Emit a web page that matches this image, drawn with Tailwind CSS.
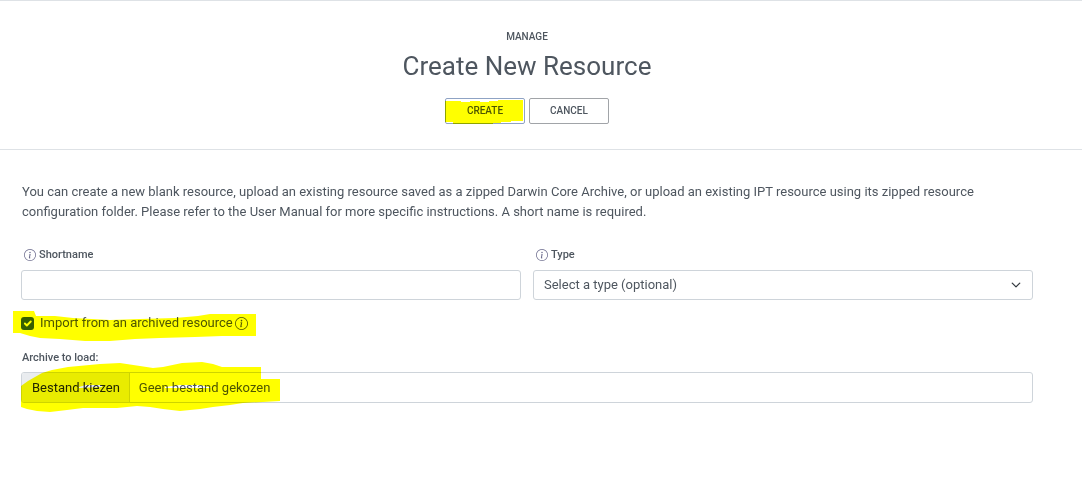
<!DOCTYPE html>
<html lang="en">
<head>
    <meta charset="UTF-8">
    <meta name="viewport" content="width=device-width, initial-scale=1.0">
    <title>Create New Resource</title>
    <script src="https://cdn.jsdelivr.net/npm/@tailwindcss/browser@4"></script>
</head>
<body class="bg-white text-[#4e565f] font-[Roboto,sans-serif] text-[13px] leading-5">
    <form action="" class="min-h-screen bg-white">
      <header class="border-y border-[#dee2e6] pt-7 pb-[25px] pl-[21px] pr-[49px] text-center">
        <p class="text-[10px] leading-4 font-medium">MANAGE</p>
        <h1 class="text-[26px] leading-[42px]">Create New Resource</h1>
        <div class="flex justify-center gap-1 pt-[11px]">
          <button type="submit" class="relative w-20 h-[26px] border border-[#8fa3c4] rounded-xs text-[10px] leading-4 font-medium">CREATE
            <svg class="absolute -left-px -top-px mix-blend-multiply" width="80" height="26" viewBox="0 0 80 26" fill="#ff0"><path d="M0 3H16V4H25V3H35V4H44V3H53V2H78V23H66V24H56V25H48V26H8V24H0Z"/></svg>
          </button>
          <button type="button" class="w-20 h-[26px] border border-[#a1a4a8] rounded-xs text-[10px] leading-4 font-medium">CANCEL</button>
        </div>
      </header>

      <main class="pl-[21px] pr-[49px] pt-8 pb-16">
        <p class="px-px">You can create a new blank resource, upload an existing resource saved as a zipped Darwin Core Archive, or upload an existing IPT resource using its zipped resource configuration folder. Please refer to the User Manual for more specific instructions. A short name is required.</p>

        <div class="grid grid-cols-2 gap-3 pt-[25px]">
          <div>
            <label for="shortname" class="flex items-center gap-[3px] pl-[3px] text-[11px] leading-4 font-medium">
              <svg width="12" height="12" viewBox="0 0 16 16" fill="#6a6a8c"><path d="M8 15A7 7 0 1 1 8 1a7 7 0 0 1 0 14m0 1A8 8 0 1 0 8 0a8 8 0 0 0 0 16"/><path d="m8.93 6.588-2.29.287-.082.38.45.083c.294.07.352.176.288.469l-.738 3.468c-.194.897.105 1.319.808 1.319.545 0 1.178-.252 1.465-.598l.088-.416c-.2.176-.492.246-.686.246-.275 0-.375-.193-.304-.533zM9 4.5a1 1 0 1 1-2 0 1 1 0 0 1 2 0"/></svg>
              Shortname
            </label>
            <input type="text" id="shortname" class="block mt-[7px] w-full h-[30px] px-[10px] border border-[#ced4da] rounded-[3px]">
          </div>
          <div>
            <label for="type" class="flex items-center gap-[3px] pl-[3px] text-[11px] leading-4 font-medium">
              <svg width="12" height="12" viewBox="0 0 16 16" fill="#6a6a8c"><path d="M8 15A7 7 0 1 1 8 1a7 7 0 0 1 0 14m0 1A8 8 0 1 0 8 0a8 8 0 0 0 0 16"/><path d="m8.93 6.588-2.29.287-.082.38.45.083c.294.07.352.176.288.469l-.738 3.468c-.194.897.105 1.319.808 1.319.545 0 1.178-.252 1.465-.598l.088-.416c-.2.176-.492.246-.686.246-.275 0-.375-.193-.304-.533zM9 4.5a1 1 0 1 1-2 0 1 1 0 0 1 2 0"/></svg>
              Type
            </label>
            <div class="relative mt-[7px]">
              <select id="type" class="block appearance-none w-full h-[30px] px-[10px] border border-[#ced4da] rounded-[3px]">
                <option value="" selected>Select a type (optional)</option>
                <option value="occurrence">Occurrence</option>
                <option value="checklist">Checklist</option>
              </select>
              <svg class="absolute right-3 top-[10px] pointer-events-none" width="10" height="10" viewBox="0 0 16 16" fill="none" stroke="#343a40" stroke-width="2" stroke-linecap="round" stroke-linejoin="round"><path d="m2 5 6 6 6-6"/></svg>
            </div>
          </div>
        </div>

        <div class="relative flex items-center mt-[13px]">
          <input type="checkbox" id="import" checked class="appearance-none size-[13px] rounded-[3px] bg-[#355f59]">
          <svg class="absolute left-0 pointer-events-none" width="13" height="13" viewBox="0 0 20 20" fill="none" stroke="#fff" stroke-width="3" stroke-linecap="round" stroke-linejoin="round"><path d="m6 10 3 3 6-6"/></svg>
          <label for="import" class="flex items-center gap-[2px] pl-[6px]">
            Import from an archived resource
            <svg width="13" height="13" viewBox="0 0 16 16" fill="#4e565f"><path d="M8 15A7 7 0 1 1 8 1a7 7 0 0 1 0 14m0 1A8 8 0 1 0 8 0a8 8 0 0 0 0 16"/><path d="m8.93 6.588-2.29.287-.082.38.45.083c.294.07.352.176.288.469l-.738 3.468c-.194.897.105 1.319.808 1.319.545 0 1.178-.252 1.465-.598l.088-.416c-.2.176-.492.246-.686.246-.275 0-.375-.193-.304-.533zM9 4.5a1 1 0 1 1-2 0 1 1 0 0 1 2 0"/></svg>
          </label>
          <svg class="absolute -left-2 -top-[3px] mix-blend-multiply pointer-events-none" width="243" height="32" viewBox="13 310 243 32" fill="#ff0"><path d="M13 311H34L36 316H55L73 318L110 320L140 319L175 318L198 316L210 314H256V336H222L195 337L160 338L135 339L110 341L85 341L60 339L40 338L30 336L20 333H13Z"/></svg>
        </div>

        <div class="pt-[17px]">
          <label for="archive" class="block px-px text-[11px] leading-4 font-medium">Archive to load:</label>
          <div class="relative mt-[6px]">
            <div class="flex h-[31px] border border-[#ced4da] rounded-[3px] overflow-hidden">
              <span class="flex items-center pl-[10px] pr-[9px] bg-[#e9ecef] border-r border-[#ced4da] text-[#212529]">Bestand kiezen</span>
              <span class="flex items-center px-[9px]">Geen bestand gekozen</span>
            </div>
            <input type="file" id="archive" class="absolute inset-0 w-full opacity-0">
            <svg class="absolute left-0 -top-[10px] mix-blend-multiply pointer-events-none" width="259" height="50" viewBox="21 362 259 50" fill="#ff0" fill-rule="evenodd"><path d="M21 386L28 381L35 377L42 373L52 370L68 367L100 364L120 363L140 366L153 368L163 367L182 363L202 362L213 364L222 367H261V379H280V401L243 403L230 405L213 407L200 409L180 411L163 409L150 407L137 406L117 408H83L67 410L50 412L37 411L27 409L21 407ZM79 387L86 385H102V387L79 388ZM165 387L180 385H200L212 388H165Z"/></svg>
          </div>
        </div>
      </main>
    </form>
</body>
</html>
